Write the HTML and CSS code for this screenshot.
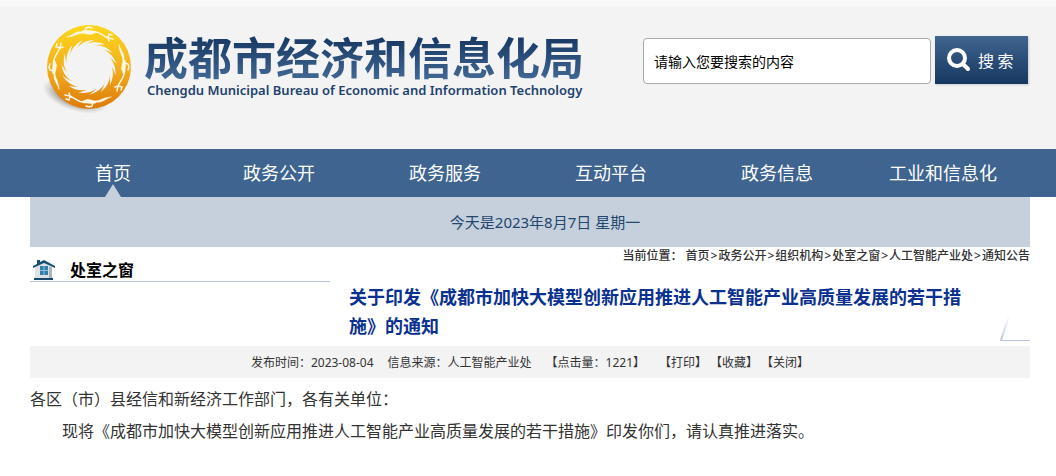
FILE: index.html
```html
<!DOCTYPE html>
<html lang="zh-CN">
<head>
    <meta charset="utf-8">
    <meta name="viewport" content="width=device-width">
    <title>成都市经济和信息化局</title>
    <link rel="stylesheet" href="styles.css">
</head>
<body>
    <header class="header">
        <div class="wrap header-inner">
            <div class="brand">
                <svg class="logo" viewBox="0 0 90 90" aria-hidden="true">
                    <defs>
                        <linearGradient id="gold" x1="0" y1="0" x2="0" y2="1">
                            <stop offset="0" stop-color="#fcd71c"/>
                            <stop offset="0.5" stop-color="#f3b01e"/>
                            <stop offset="1" stop-color="#dd7a0c"/>
                        </linearGradient>
                        <radialGradient id="shade">
                            <stop offset="0.4" stop-color="#6b5c4c" stop-opacity="0.8"/>
                            <stop offset="1" stop-color="#999" stop-opacity="0"/>
                        </radialGradient>
                        <path id="ray" fill="#f3f3f3" d="M27 39C25 29 31 20 40 16C35 21 32 26 34 32L32 42Z"/>
                        <g id="bird" fill="none" stroke="#fff8e8" stroke-linecap="round" stroke-linejoin="round">
                            <path fill="#fff8e8" stroke-width="0.5" d="M24 13C30 11 33 7 38 8C41 5 46 7 50 7C53 7 54 8 52 9C48 11 43 10 40 9C35 9 31 13 24 13Z"/>
                            <path stroke-width="1.4" d="M42 7L43 4L46 3L49 4M44 9L48 10M51 8C55 7 59 11 65 14M65 14L66 10L69 11M65 14L70 15M65 14L66 17"/>
                        </g>
                    </defs>
                    <ellipse cx="32" cy="72" rx="34" ry="15" fill="url(#shade)" transform="rotate(18 32 72)"/>
                    <circle cx="46" cy="43" r="42" fill="url(#gold)"/>
                    <circle cx="46" cy="43" r="19" fill="#f3f3f3"/>
                    <use href="#ray"/>
                    <use href="#ray" transform="rotate(24 46 43)"/>
                    <use href="#ray" transform="rotate(48 46 43)"/>
                    <use href="#ray" transform="rotate(72 46 43)"/>
                    <use href="#ray" transform="rotate(96 46 43)"/>
                    <use href="#ray" transform="rotate(120 46 43)"/>
                    <use href="#ray" transform="rotate(144 46 43)"/>
                    <use href="#ray" transform="rotate(168 46 43)"/>
                    <use href="#ray" transform="rotate(192 46 43)"/>
                    <use href="#ray" transform="rotate(216 46 43)"/>
                    <use href="#ray" transform="rotate(240 46 43)"/>
                    <use href="#ray" transform="rotate(264 46 43)"/>
                    <use href="#ray" transform="rotate(288 46 43)"/>
                    <use href="#ray" transform="rotate(312 46 43)"/>
                    <use href="#ray" transform="rotate(336 46 43)"/>
                    <use href="#bird"/>
                    <use href="#bird" transform="rotate(90 46 43)"/>
                    <use href="#bird" transform="rotate(180 46 43)"/>
                    <use href="#bird" transform="rotate(270 46 43)"/>
                </svg>
                <div>
                    <h1 class="brand-name">成都市经济和信息化局</h1>
                    <p class="brand-en">Chengdu Municipal Bureau of Economic and Information Technology</p>
                </div>
            </div>
            <form class="search">
                <input class="search-text" type="text" value="请输入您要搜索的内容" aria-label="搜索内容">
                <button class="search-btn" type="button">
                    <svg width="24" height="24" viewBox="0 0 24 24" fill="none" stroke="#fff" aria-hidden="true">
                        <circle cx="10" cy="10" r="8" stroke-width="4"/>
                        <path stroke-width="4" stroke-linecap="round" d="M16 16L21 21"/>
                    </svg>
                    <span>搜 索</span>
                </button>
            </form>
        </div>
    </header>

    <nav class="nav">
        <ul class="wrap nav-list">
            <li><a class="active" href="#">首页</a></li>
            <li><a href="#">政务公开</a></li>
            <li><a href="#">政务服务</a></li>
            <li><a href="#">互动平台</a></li>
            <li><a href="#">政务信息</a></li>
            <li><a href="#">工业和信息化</a></li>
        </ul>
    </nav>

    <main class="wrap">
        <p class="today">今天是2023年8月7日 星期一</p>

        <div class="location">
            <h2 class="column-title">
                <svg width="24" height="22" viewBox="0 0 24 22" aria-hidden="true">
                    <path fill="#dfe2e5" d="M3 8L12 2L20 8V19H3Z"/>
                    <path fill="#aab4bc" d="M17 8H20V19H17Z"/>
                    <path fill="#17506f" d="M5 1H8V3L12 1L23 7V9L12 4L1 9V7L5 5Z"/>
                    <path fill="#2f7fa8" d="M8 7H16V16H8Z"/>
                    <path stroke="#8fc0d8" d="M12 7V16M8 11.5H16"/>
                    <path fill="#164a66" d="M2 19H21V21H2Z"/>
                </svg>
                处室之窗
            </h2>
            <div class="crumbs">当前位置： <a href="#">首页</a><i>&gt;</i><a href="#">政务公开</a><i>&gt;</i><a href="#">组织机构</a><i>&gt;</i><a href="#">处室之窗</a><i>&gt;</i><a href="#">人工智能产业处</a><i>&gt;</i><a href="#">通知公告</a></div>
        </div>

        <article>
            <div class="title-row">
                <h2 class="title">关于印发《成都市加快大模型创新应用推进人工智能产业高质量发展的若干措施》的通知</h2>
                <svg width="30" height="26" viewBox="0 0 30 26" fill="none" stroke="#b8c4e2" aria-hidden="true">
                    <defs>
                        <linearGradient id="fade" x1="0" y1="1" x2="0" y2="0">
                            <stop offset="0" stop-color="#b8c4e2"/>
                            <stop offset="1" stop-color="#b8c4e2" stop-opacity="0"/>
                        </linearGradient>
                    </defs>
                    <path stroke="url(#fade)" stroke-width="2" d="M9 1L1 25"/>
                    <path d="M0 25.5H30"/>
                </svg>
            </div>
            <div class="meta">
                <span>发布时间：2023-08-04</span>
                <span>信息来源：人工智能产业处</span>
                <span>【点击量：1221】</span>
                <span class="tools"><a href="#">【打印】</a> <a href="#">【收藏】</a> <a href="#">【关闭】</a></span>
            </div>
            <div class="content">
                <p>各区（市）县经信和新经济工作部门，各有关单位：</p>
                <p class="indent">现将《成都市加快大模型创新应用推进人工智能产业高质量发展的若干措施》印发你们，请认真推进落实。</p>
            </div>
        </article>
    </main>
</body>
</html>
```
FILE: styles.css
```css
* {
    box-sizing: border-box;
}
body {
    margin: 0;
    background: #fff;
    color: #333;
    font: 12px/18px "Noto Sans", "Noto Sans CJK SC", sans-serif;
}
h1, h2, p, ul {
    margin: 0;
    padding: 0;
}
a {
    color: inherit;
    text-decoration: none;
}
.wrap {
    padding: 0 26px 0 30px;
}

/* header */
.header {
    background: #f3f3f3;
    border-top: 6px solid #f8f8f8;
}
.header-inner {
    display: flex;
    justify-content: space-between;
    align-items: flex-start;
    height: 143px;
}
.brand {
    display: flex;
    gap: 11px;
    padding: 18px 0 0 13px;
}
.logo {
    width: 90px;
    height: 90px;
}
.brand-name {
    padding-top: 12px;
    font-size: 44px;
    line-height: 44px;
    font-weight: 700;
    color: transparent;
    background: linear-gradient(#1a3c66 30%, #3f6591 95%);
    -webkit-background-clip: text;
    background-clip: text;
}
.brand-en {
    padding-left: 3px;
    color: #1e426e;
    font: 600 13px/20px "Noto Sans", sans-serif;
}
.search {
    display: flex;
    gap: 4px;
    padding: 30px 2px 0 0;
}
.search-text {
    width: 288px;
    height: 46px;
    margin-top: 2px;
    padding: 0 10px;
    border: 1px solid #aaa;
    border-radius: 4px;
    background: #fff;
    color: #000;
    font: 14px "Noto Sans CJK SC", sans-serif;
}
.search-btn {
    display: flex;
    align-items: center;
    gap: 7px;
    width: 93px;
    height: 48px;
    padding: 0 12px;
    border: 0;
    background: linear-gradient(#40658f, #163760);
    box-shadow: 1px 1px 2px #ccc;
    color: #fff;
    font: 16px "Noto Sans CJK SC", sans-serif;
    white-space: nowrap;
}

/* main menu */
.nav {
    background: #3e648f;
}
.nav-list {
    display: grid;
    grid-template-columns: repeat(6, 1fr);
    padding: 0 30px;
    list-style: none;
}
.nav a {
    display: block;
    position: relative;
    color: #fff;
    font-size: 18px;
    line-height: 48px;
    text-align: center;
}
.nav .active::after {
    content: "";
    position: absolute;
    bottom: 0;
    left: 50%;
    margin-left: -8px;
    border: 8px solid transparent;
    border-top: 0;
    border-bottom: 13px solid #c5d0dc;
}

.today {
    padding-left: 30px;
    background: #c5d0dc;
    color: #23466f;
    font-size: 15px;
    line-height: 50px;
    text-align: center;
}

/* column name and breadcrumb */
.location {
    display: flex;
    justify-content: space-between;
    align-items: flex-start;
}
.column-title {
    display: flex;
    align-items: center;
    gap: 14px;
    width: 300px;
    height: 35px;
    padding: 12px 0 0 2px;
    border-bottom: 1px solid #b8c4da;
    color: #000;
    font-size: 16px;
    line-height: 22px;
}
.crumbs {
    font-weight: 500;
}
.crumbs i {
    margin: 0 1px;
    font-style: normal;
}

/* article */
.title-row {
    display: flex;
    justify-content: space-between;
    align-items: flex-end;
    padding-bottom: 5px;
}
.title {
    flex: 0 1 940px;
    padding: 1px 0 0 319px;
    color: #0a318f;
    font-size: 18px;
    line-height: 29px;
}
.meta {
    display: flex;
    justify-content: center;
    gap: 14px;
    padding-top: 2px;
    background: #f3f3f3;
    line-height: 30px;
}
.tools {
    display: flex;
    gap: 3px;
}
.content {
    padding-top: 5px;
    font-size: 16px;
    line-height: 32px;
}
.indent {
    text-indent: 2em;
}
```
